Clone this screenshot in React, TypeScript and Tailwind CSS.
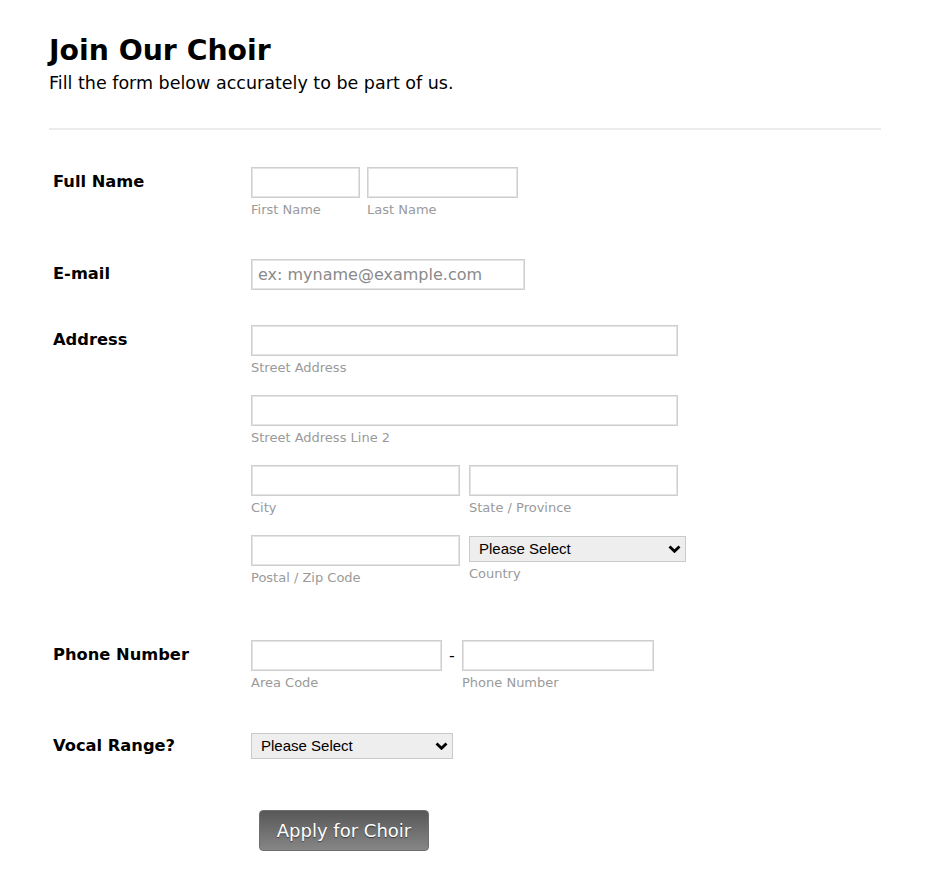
import React from 'react';

const inputCls =
  'block h-[31px] border border-[#cfcfcf] bg-white px-[6px] text-[16px] text-black shadow-[inset_0_0_0_1px_#e4e4e4] outline-none placeholder:text-[#8a8a8a]';

const subCls = 'mt-[4px] block text-[13px] leading-[15px] text-[#9a9a9a]';

const Chevron = () => (
  <svg
    viewBox="0 0 13 8"
    className="pointer-events-none absolute right-[5px] top-1/2 h-[8px] w-[13px] -translate-y-1/2"
  >
    <path d="M1.5 1.5 L6.5 6.3 L11.5 1.5" fill="none" stroke="#000" strokeWidth="2.8" />
  </svg>
);

const SelectBox: React.FC<{ width: string }> = ({ width }) => (
  <div className={`relative ${width}`}>
    <select className="block h-[26px] w-full appearance-none border border-[#cacaca] bg-[#eeeeee] pl-[9px] font-['Liberation_Sans',Arial,sans-serif] text-[15px] text-black outline-none">
      <option>Please Select</option>
    </select>
    <Chevron />
  </div>
);

const Field: React.FC<{ w: string; label: string }> = ({ w, label }) => (
  <div className={w}>
    <input type="text" className={`${inputCls} w-full`} />
    <span className={subCls}>{label}</span>
  </div>
);

const Row: React.FC<{ label: string; className?: string; children: React.ReactNode }> = ({
  label,
  className = '',
  children,
}) => (
  <div className={`flex items-start pl-[4px] ${className}`}>
    <div className="flex h-[31px] w-[198px] shrink-0 items-center text-[16.3px] font-bold text-black">{label}</div>
    <div>{children}</div>
  </div>
);

export default function App() {
  return (
    <div className="min-h-[880px] bg-white px-[49px] font-['DejaVu_Sans',Verdana,sans-serif] text-black">
      <h1 className="pt-[34px] text-[28.3px] font-bold leading-[34px]">Join Our Choir</h1>
      <p className="mt-[4px] text-[17.5px] leading-[22px]">Fill the form below accurately to be part of us.</p>

      <div className="mt-[34px] h-[2px] w-[832px] bg-[#ececec]" />

      <Row label="Full Name" className="mt-[37px]">
        <div className="flex gap-[7px]">
          <Field w="w-[109px]" label="First Name" />
          <Field w="w-[151px]" label="Last Name" />
        </div>
      </Row>

      <Row label="E-mail" className="mt-[42px]">
        <input type="text" placeholder="ex: myname@example.com" className={`${inputCls} w-[274px]`} />
      </Row>

      <Row label="Address" className="mt-[35px]">
        <div className="flex w-[435px] flex-col gap-[20px]">
          <Field w="w-[427px]" label="Street Address" />
          <Field w="w-[427px]" label="Street Address Line 2" />
          <div className="flex gap-[9px]">
            <Field w="w-[209px]" label="City" />
            <Field w="w-[209px]" label="State / Province" />
          </div>
          <div className="flex items-start gap-[9px]">
            <Field w="w-[209px]" label="Postal / Zip Code" />
            <div className="pt-[1px]">
              <SelectBox width="w-[217px]" />
              <span className={subCls}>Country</span>
            </div>
          </div>
        </div>
      </Row>

      <Row label="Phone Number" className="mt-[55px]">
        <div className="flex items-start">
          <Field w="w-[191px]" label="Area Code" />
          <div className="flex h-[31px] w-[20px] items-center justify-center text-[16px]">-</div>
          <Field w="w-[192px]" label="Phone Number" />
        </div>
      </Row>

      <div className="mt-[43px] flex items-center pl-[4px]">
        <div className="w-[198px] shrink-0 text-[16.3px] font-bold">Vocal Range?</div>
        <SelectBox width="w-[202px]" />
      </div>

      <div className="mt-[51px] pl-[210px]">
        <button
          type="button"
          className="h-[41px] w-[170px] rounded-[4px] border border-[#6e6e6e] bg-gradient-to-b from-[#585858] to-[#868686] text-[18px] text-white [text-shadow:0_1px_1px_rgba(0,0,0,0.5)]"
        >
          Apply for Choir
        </button>
      </div>
    </div>
  );
}
